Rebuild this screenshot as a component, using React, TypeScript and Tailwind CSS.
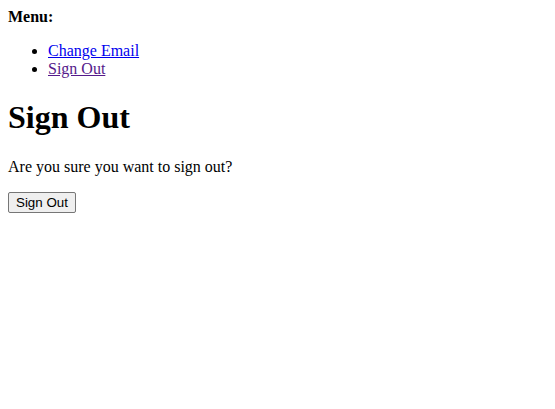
import React from 'react';

const App: React.FC = () => {
  return (
    <div className="min-h-screen bg-white p-2 text-black font-['Liberation_Serif',serif] text-[16px] leading-[normal]">
      {/* Menu */}
      <b className="block font-bold">Menu:</b>
      <ul className="list-disc my-4 pl-10">
        <li>
          <a href="#" className="text-[#0000ee] underline">Change Email</a>
        </li>
        <li>
          <a href="#" className="text-[#551a8b] underline">Sign Out</a>
        </li>
      </ul>

      <h1 className="text-[32px] font-bold leading-[normal] my-[21.44px]">Sign Out</h1>
      <p className="my-4">Are you sure you want to sign out?</p>

      <button className="bg-[#efefef] border border-[#767676] rounded-[2px] px-[7px] py-[2px] text-[13.333px] leading-[normal] text-black font-['Liberation_Sans',Arial,sans-serif]">
        Sign Out
      </button>
    </div>
  );
};

export default App;
